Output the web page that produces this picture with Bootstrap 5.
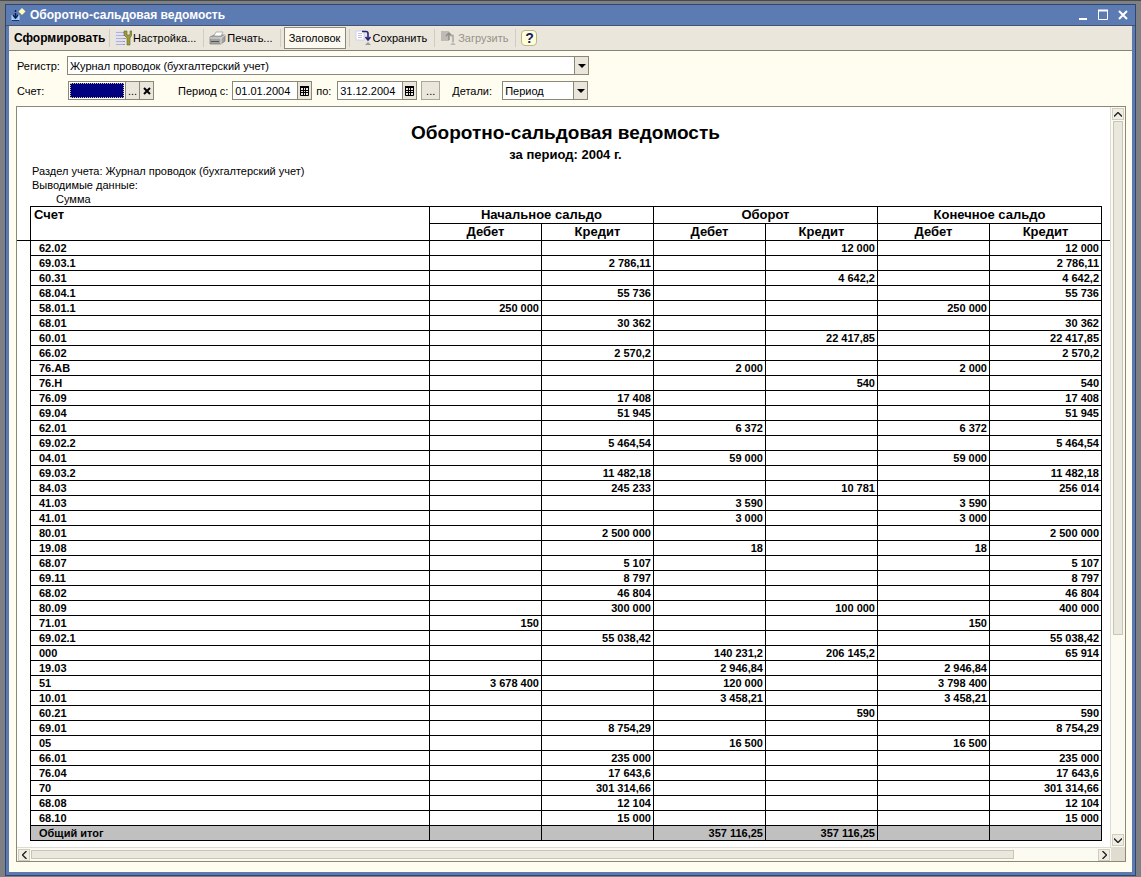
<!DOCTYPE html>
<html lang="ru">
<head>
<meta charset="utf-8">
<meta name="viewport" content="width=device-width, initial-scale=1">
<title>Оборотно-сальдовая ведомость</title>
<link href="https://cdn.jsdelivr.net/npm/bootstrap@5.3.0/dist/css/bootstrap.min.css" rel="stylesheet">
<style>
  body { background: #7f8083; font: 11px/14px "Liberation Sans", Arial, sans-serif; color: #000; padding: 3px 5px 2px; border-top: 1px solid #454c50; }
  button, input, select { font: inherit; color: inherit; border-radius: 0; }
  .app-window { min-height: calc(100vh - 6px); background: #fffcf0; border: solid #5d7ab0; border-width: 0 4px 4px; outline: 1px solid #30466f; outline-offset: -1px; }
  .title-bar { height: 22px; margin: 0 -4px; padding: 0 3px 0 6px; background: #5d7bb3; border-top: 1px solid #8ba3cd; border-bottom: 1px solid #45536e; color: #fff; }
  .title-bar h1 { font-size: 12px; line-height: 20px; font-weight: bold; margin-left: 4px; }
  .title-bar button { width: 20px; height: 20px; padding: 0; border: 0; background: none; display: flex; align-items: center; justify-content: center; }
  .tool-bar { height: 25px; background: #eae6dc; border-bottom: 1px solid #85827a; padding-left: 1px; }
  .tool-bar button { height: 22px; padding: 0 4px 0 2px; border: 0; background: none; display: flex; align-items: center; white-space: nowrap; }
  .tool-bar svg { flex: none; margin-right: 1px; }
  .tool-bar .tool-main { font-size: 12px; font-weight: bold; width: 99px; padding-left: 4px; justify-content: flex-start; }
  .tool-bar .tool-pressed { border: 1px solid #8c8878; background: #fcfaf0; padding: 0 3px; width: 62px; justify-content: center; }
  .tool-bar .tool-off { color: #969389; }
  .tool-bar .tool-help { width: 16px; height: 16px; padding: 0; margin-left: 2px; background: #fffed8; border: 1px solid #bab58a; border-radius: 4px; color: #102068; font-size: 14px; font-weight: bold; justify-content: center; }
  .tool-sep { width: 1px; height: 18px; background: #d0ccc0; margin: 0 3px; }
  .form-rows { padding: 5px 8px 0; }
  .form-line { height: 19px; margin-bottom: 6px; }
  .cap { width: 50px; }
  .cap-to { width: 17px; }
  .box { height: 19px; border: 1px solid #8c8878; background: #fff; display: flex; min-width: 0; }
  .box input, .box select { border: 0; padding: 0 2px; height: 17px; background: #fff; min-width: 0; flex: 1; outline: 0; appearance: none; }
  .box button { width: 14px; border: 0; border-left: 1px solid #8c8878; background: #eae6dc; padding: 0; display: flex; align-items: center; justify-content: center; flex: none; }
  .box-register { width: 522px; }
  .box-account { width: 86px; margin-left: 1px; }
  .box .account-input { background: #000080; color: #fff; margin: 1px; height: 15px; outline: 1px dotted #c8c890; outline-offset: -1px; }
  .box-date { width: 80px; }
  .box-detail { width: 86px; }
  .more-btn { width: 19px; height: 19px; padding: 0; margin-right: 12px; border: 1px solid #aaa698; background: #eae6dc; }
  .sheet { margin: 0 6px 10px 7px; border: 1px solid #8c8878; background: #fff; display: grid; grid-template-columns: minmax(0, 1fr) 14px; grid-template-rows: auto 14px; }
  .report { padding: 15px 0 6px; border-right: 1px solid #dedbd2; }
  .report-head { padding: 0 9px 0 13px; }
  .report h2 { font-size: 19px; line-height: 22px; font-weight: bold; margin: 0; text-align: center; }
  .report h3 { font-size: 13px; line-height: 16px; font-weight: bold; margin: 3px 0 1px; text-align: center; }
  .meta { line-height: 14px; margin: 0 2px; }
  .ledger { width: calc(100% - 21px); margin: 0 8px 0 13px; table-layout: fixed; border-collapse: collapse; font-weight: bold; }
  .ledger th, .ledger td { border: 1px solid #000; padding: 0 2px 0 0; height: 15px; text-align: right; white-space: nowrap; }
  .ledger .c-num { width: 112px; }
  .ledger thead th { font-size: 13px; line-height: 16px; height: 17px; text-align: center; padding: 0; }
  .ledger thead th.acc-head { text-align: left; vertical-align: top; padding-left: 3px; position: relative; }
  .ledger thead th.acc-head::after { content: ""; position: absolute; left: -14px; bottom: -1px; width: 14px; height: 1px; background: #000; }
  .ledger thead th.end-head { position: relative; }
  .ledger thead th.end-head::after { content: ""; position: absolute; right: -9px; bottom: -1px; width: 9px; height: 1px; background: #000; }
  .ledger tbody th, .ledger tfoot th { text-align: left; padding-left: 8px; }
  .ledger tfoot { background: #c0c0c0; }
  .scroll-v, .scroll-h { background: #fcfbf1; display: flex; padding: 1px; }
  .scroll-v { flex-direction: column; }
  .scroll-h { border-top: 1px solid #dedbd2; }
  .scroll-v button, .scroll-h button { width: 12px; height: 12px; padding: 0; border: 1px solid #d0ccc0; background: #f0eee4; display: flex; align-items: center; justify-content: center; flex: none; }
  .scroll-v .thumb { height: 72%; }
  .scroll-h .thumb { width: 92%; }
  .thumb { background: #eae7dc; border: 1px solid #c9c5b8; margin: 1px; }
  .corner { background: #e0dccf; }
</style>
</head>
<body>
<main class="app-window">
  <header class="title-bar d-flex align-items-center">
    <svg width="15" height="16" viewBox="0 0 15 16" aria-hidden="true"><path d="M1 8v5h7V8" fill="#8fc0ef" stroke="#b8e0ff"/><path d="M4.500 3v2m0 1v5M2 8l2.500 3L7 8" fill="none" stroke="#09204f" stroke-width="1.500"/><path d="M1 13.500h7" stroke="#163568"/><path d="M11 1l3.500 3.500L11 8 7.500 4.500z" fill="#fffbb0"/></svg>
    <h1 class="mb-0 flex-grow-1">Оборотно-сальдовая ведомость</h1>
    <button type="button" aria-label="Свернуть"><svg width="12" height="12"><path d="M2 10h8" stroke="#fff" stroke-width="2"/></svg></button>
    <button type="button" aria-label="Развернуть"><svg width="12" height="12"><path d="M1.500 1.500h9v9h-9z" fill="none" stroke="#fff"/><path d="M1 1.500h10" stroke="#fff" stroke-width="2"/></svg></button>
    <button type="button" aria-label="Закрыть"><svg width="12" height="12"><path d="M2 2l8 8M10 2l-8 8" stroke="#fff" stroke-width="2"/></svg></button>
  </header>

  <div class="tool-bar d-flex align-items-center">
    <button type="button" class="tool-main">Сформировать</button>
    <span class="tool-sep ms-0"></span>
    <button type="button"><svg width="17" height="16" viewBox="0 0 17 16"><path d="M1 2.500h10M1 5.500h10M1 8.500h10M1 11.500h9M1 14.500h9" stroke="#9193c9"/><path d="M0 1h8v14H0z" fill="#dcdcfa" opacity=".4"/><path d="M9 1v4l3 3v7h3V8l2-3V1h-2v4h-3V1z" fill="#9b9b3e" stroke="#62682d" stroke-width=".6"/></svg>Настройка...</button>
    <span class="tool-sep"></span>
    <button type="button"><svg width="17" height="14" viewBox="0 0 17 14"><path d="M1 6l4-2h11v6l-4 3H1z" fill="#a3a3a1" stroke="#777" stroke-width=".7"/><path d="M5 5l2-4h7l-2 4z" fill="#fff" stroke="#999" stroke-width=".7"/><path d="M1 7h11l4-3M12 7v6" stroke="#e2e2df" fill="none"/><path d="M2 10.500h8" stroke="#555"/></svg>Печать...</button>
    <span class="tool-sep"></span>
    <button type="button" class="tool-pressed" aria-pressed="true">Заголовок</button>
    <span class="tool-sep"></span>
    <button type="button"><svg width="17" height="16" viewBox="0 0 17 16"><path d="M1 1h8v9H1z" fill="#fff" stroke="#c9c9ed" stroke-width=".8"/><path d="M3 3.500h4M3 5.500h4M3 7.500h4" stroke="#c2c2de"/><path d="M7 1.500h4q2 0 2 2V9M10.500 7l2.500 3 2.500-3" fill="none" stroke="#262680" stroke-width="1.600"/><path d="M10 15l3-3 3 3z" fill="#999"/></svg>Сохранить</button>
    <span class="tool-sep"></span>
    <button type="button" class="tool-off" disabled><svg width="17" height="16" viewBox="0 0 17 16"><path d="M1 1h8v10H1z" fill="#bdbbb4"/><path d="M6 6l3-3 3 3M9 3v7" fill="none" stroke="#8f8d87" stroke-width="1.500"/><path d="M10 5.500h3V12" fill="none" stroke="#aaa79f" stroke-width="1.500"/><path d="M10 15l3-3 3 3z" fill="#bbb"/></svg>Загрузить</button>
    <span class="tool-sep"></span>
    <button type="button" class="tool-help" aria-label="Справка">?</button>
  </div>

  <form class="form-rows">
    <div class="form-line d-flex align-items-center">
      <label class="cap" for="register">Регистр:</label>
      <div class="box box-register"><input id="register" type="text" value="Журнал проводок (бухгалтерский учет)"><button type="button" aria-label="Выбрать регистр"><svg width="8" height="4"><path d="M0 0h8L4 4z"/></svg></button></div>
    </div>
    <div class="form-line d-flex align-items-center">
      <label class="cap" for="account">Счет:</label>
      <div class="box box-account"><input id="account" class="account-input" type="text"><button type="button" aria-label="Выбрать счет">...</button><button type="button" aria-label="Очистить"><svg width="8" height="8"><path d="M1 1l6 6M7 1L1 7" stroke="#000" stroke-width="2"/></svg></button></div>
      <label class="ms-4" for="date-from">Период с:</label>
      <div class="box box-date ms-1"><input id="date-from" type="text" value="01.01.2004"><button type="button" aria-label="Календарь"><svg width="9" height="10"><path d="M.5 1.500h8v8h-8zM3.500 2v7M5.500 2v7M1 4.500h7M1 6.500h7" fill="none" stroke="#000"/><path d="M0 1h9" stroke="#000" stroke-width="2"/></svg></button></div>
      <label class="ms-1 cap-to" for="date-to">по:</label>
      <div class="box box-date ms-1"><input id="date-to" type="text" value="31.12.2004"><button type="button" aria-label="Календарь"><svg width="9" height="10"><path d="M.5 1.500h8v8h-8zM3.500 2v7M5.500 2v7M1 4.500h7M1 6.500h7" fill="none" stroke="#000"/><path d="M0 1h9" stroke="#000" stroke-width="2"/></svg></button></div>
      <button type="button" class="more-btn ms-1" aria-label="Выбрать период">...</button>
      <label class="cap" for="detail">Детали:</label>
      <div class="box box-detail"><select id="detail"><option>Период</option></select><button type="button" aria-label="Открыть список"><svg width="8" height="4"><path d="M0 0h8L4 4z"/></svg></button></div>
    </div>
  </form>

  <section class="sheet">
    <div class="report">
      <div class="report-head">
        <h2>Оборотно-сальдовая ведомость</h2>
        <h3>за период: 2004 г.</h3>
        <p class="meta">Раздел учета: Журнал проводок (бухгалтерский учет)</p>
        <p class="meta">Выводимые данные:</p>
        <p class="meta ps-4">Сумма</p>
      </div>
      <table class="ledger">
        <colgroup><col><col class="c-num"><col class="c-num"><col class="c-num"><col class="c-num"><col class="c-num"><col class="c-num"></colgroup>
        <thead>
          <tr><th class="acc-head" rowspan="2">Счет</th><th colspan="2">Начальное сальдо</th><th colspan="2">Оборот</th><th colspan="2">Конечное сальдо</th></tr>
          <tr><th>Дебет</th><th>Кредит</th><th>Дебет</th><th>Кредит</th><th>Дебет</th><th class="end-head">Кредит</th></tr>
        </thead>
        <tbody id="ledger-body"></tbody>
        <tfoot><tr><th>Общий итог</th><td></td><td></td><td>357 116,25</td><td>357 116,25</td><td></td><td></td></tr></tfoot>
      </table>
    </div>
    <div class="scroll-v"><button type="button" aria-label="Вверх"><svg width="8" height="5"><path d="M0 4.500l4-4 4 4" fill="none" stroke="#222" stroke-width="1.400"/></svg></button><div class="flex-grow-1"><div class="thumb"></div></div><button type="button" aria-label="Вниз"><svg width="8" height="5"><path d="M0 .5l4 4 4-4" fill="none" stroke="#222" stroke-width="1.400"/></svg></button></div>
    <div class="scroll-h"><button type="button" aria-label="Влево"><svg width="5" height="8"><path d="M4.500 0l-4 4 4 4" fill="none" stroke="#222" stroke-width="1.400"/></svg></button><div class="flex-grow-1 d-flex"><div class="thumb"></div></div><button type="button" aria-label="Вправо"><svg width="5" height="8"><path d="M.5 0l4 4-4 4" fill="none" stroke="#222" stroke-width="1.400"/></svg></button></div>
    <div class="corner"></div>
  </section>
</main>
<script src="https://cdn.jsdelivr.net/npm/bootstrap@5.3.0/dist/js/bootstrap.bundle.min.js"></script>
<script>
  // account | opening debit | opening credit | turnover debit | turnover credit | closing debit | closing credit
  const ledger = `62.02||||12 000||12 000
69.03.1||2 786,11||||2 786,11
60.31||||4 642,2||4 642,2
68.04.1||55 736||||55 736
58.01.1|250 000||||250 000|
68.01||30 362||||30 362
60.01||||22 417,85||22 417,85
66.02||2 570,2||||2 570,2
76.АВ|||2 000||2 000|
76.Н||||540||540
76.09||17 408||||17 408
69.04||51 945||||51 945
62.01|||6 372||6 372|
69.02.2||5 464,54||||5 464,54
04.01|||59 000||59 000|
69.03.2||11 482,18||||11 482,18
84.03||245 233||10 781||256 014
41.03|||3 590||3 590|
41.01|||3 000||3 000|
80.01||2 500 000||||2 500 000
19.08|||18||18|
68.07||5 107||||5 107
69.11||8 797||||8 797
68.02||46 804||||46 804
80.09||300 000||100 000||400 000
71.01|150||||150|
69.02.1||55 038,42||||55 038,42
000|||140 231,2|206 145,2||65 914
19.03|||2 946,84||2 946,84|
51|3 678 400||120 000||3 798 400|
10.01|||3 458,21||3 458,21|
60.21||||590||590
69.01||8 754,29||||8 754,29
05|||16 500||16 500|
66.01||235 000||||235 000
76.04||17 643,6||||17 643,6
70||301 314,66||||301 314,66
68.08||12 104||||12 104
68.10||15 000||||15 000`;
  document.getElementById('ledger-body').innerHTML = ledger.split('\n').map(line => {
    const [account, ...sums] = line.split('|');
    return `<tr><th>${account}</th>${sums.map(s => `<td>${s}</td>`).join('')}</tr>`;
  }).join('');
</script>
</body>
</html>
